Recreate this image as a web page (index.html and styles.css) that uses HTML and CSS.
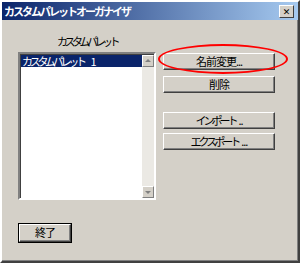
FILE: index.html
```html
<html>
<head><meta http-equiv="Content-Type" content="text/html; charset=utf-8">
<link rel="stylesheet" href="styles.css">
</head>
<body>
<div class="win">
  <div class="title">
    <span class="ttext">カスタムパレットオーガナイザ</span>
    <span class="close">&#x2715;</span>
  </div>
  <div class="body">
    <div class="leftcol">
      <div class="lbl">カスタムパレット</div>
      <div class="list">
        <div class="items">
          <div class="item sel"><span class="kana">カスタムパレット</span><span class="num">1</span></div>
        </div>
        <div class="sbar">
          <div class="arr"><span class="up"></span></div>
          <div class="track"></div>
          <div class="arr"><span class="dn"></span></div>
        </div>
      </div>
      <div class="btn endbtn">終了</div>
    </div>
    <div class="rightcol">
      <div class="btn b1">名前変更...</div>
      <div class="btn b2">削除</div>
      <div class="btn b3"><span class="kana">インポート</span>..</div>
      <div class="btn b4"><span class="kana">エクスポート</span>...</div>
    </div>
  </div>
  <div class="mark"></div>
</div>
</body>
</html>
```
FILE: styles.css
```css
body {
	margin: 0;
	font-family: "Noto Sans CJK JP", "DejaVu Sans", sans-serif;
	font-size: 11px;
	background: #ffffff;
}
.win {
	position: relative;
	width: 296px;
	height: 259px;
	background: #d4d0c8;
	border: 2px solid;
	border-color: #ffffff #404040 #404040 #ffffff;
	box-shadow: inset -1px -1px 0 #808080;
}
.title {
	height: 18px;
	display: flex;
	align-items: center;
	justify-content: space-between;
	background: linear-gradient(to right, #0a246a, #a6caf0);
	padding: 0 4px 0 2px;
}
.ttext {
	color: #ffffff;
	font-weight: bold;
	font-size: 11px;
	letter-spacing: -2px;
}
.close {
	width: 13px;
	height: 11px;
	line-height: 11px;
	text-align: center;
	font-size: 9px;
	font-weight: bold;
	color: #000000;
	background: #d4d0c8;
	border: 1px solid;
	border-color: #ffffff #404040 #404040 #ffffff;
}
.body {
	display: flex;
	padding: 12px 0 0 16px;
}
.leftcol {
	width: 138px;
	display: flex;
	flex-direction: column;
}
.lbl {
	text-align: center;
	height: 20px;
	line-height: 18px;
	letter-spacing: -3.5px;
}
.kana {
	letter-spacing: -3px;
}
.list {
	height: 144px;
	display: flex;
	background: #ffffff;
	border: 2px solid;
	border-color: #808080 #ffffff #ffffff #808080;
	box-shadow: inset 1px 1px 0 #404040, 1px 1px 0 #d4d0c8;
}
.items {
	flex: 1;
	padding: 1px 0 0 1px;
}
.item {
	height: 12px;
	line-height: 12px;
	padding-left: 1px;
	font-size: 11px;
}
.item .kana {
	letter-spacing: -3.3px;
}
.num {
	margin-left: 7px;
}
.item.sel {
	background: #0a246a;
	color: #ffffff;
}
.sbar {
	width: 12px;
	display: flex;
	flex-direction: column;
	padding-top: 1px;
}
.arr {
	height: 10px;
	background: #d4d0c8;
	border: 1px solid;
	border-color: #ffffff #808080 #808080 #ffffff;
	position: relative;
}
.up, .dn {
	position: absolute;
	left: 2px;
	width: 0;
	height: 0;
	border-left: 3px solid transparent;
	border-right: 3px solid transparent;
}
.up {
	top: 3px;
	border-bottom: 3px solid #808080;
}
.dn {
	top: 4px;
	border-top: 3px solid #808080;
}
.track {
	flex: 1;
	background: #ebe9e4;
}
.btn {
	height: 15px;
	line-height: 14px;
	text-align: center;
	background: #d4d0c8;
	border: 1px solid;
	border-color: #ffffff #404040 #404040 #ffffff;
	box-shadow: inset -1px -1px 0 #808080;
	letter-spacing: -1px;
}
.btn .kana {
	letter-spacing: -3px;
	margin-right: 3px;
}
.endbtn {
	width: 50px;
	height: 16px;
	margin-top: 24px;
	outline: 1px solid #000000;
	margin-left: 1px;
}
.rightcol {
	width: 112px;
	margin-left: 7px;
	margin-top: 21px;
	display: flex;
	flex-direction: column;
}
.b2 {
	margin-top: 6px;
}
.b3 {
	margin-top: 19px;
}
.b4 {
	margin-top: 4px;
}
.mark {
	position: absolute;
	left: 156px;
	top: 42px;
	width: 126px;
	height: 26px;
	border: 2px solid #ff0000;
	border-radius: 50%;
}
```
